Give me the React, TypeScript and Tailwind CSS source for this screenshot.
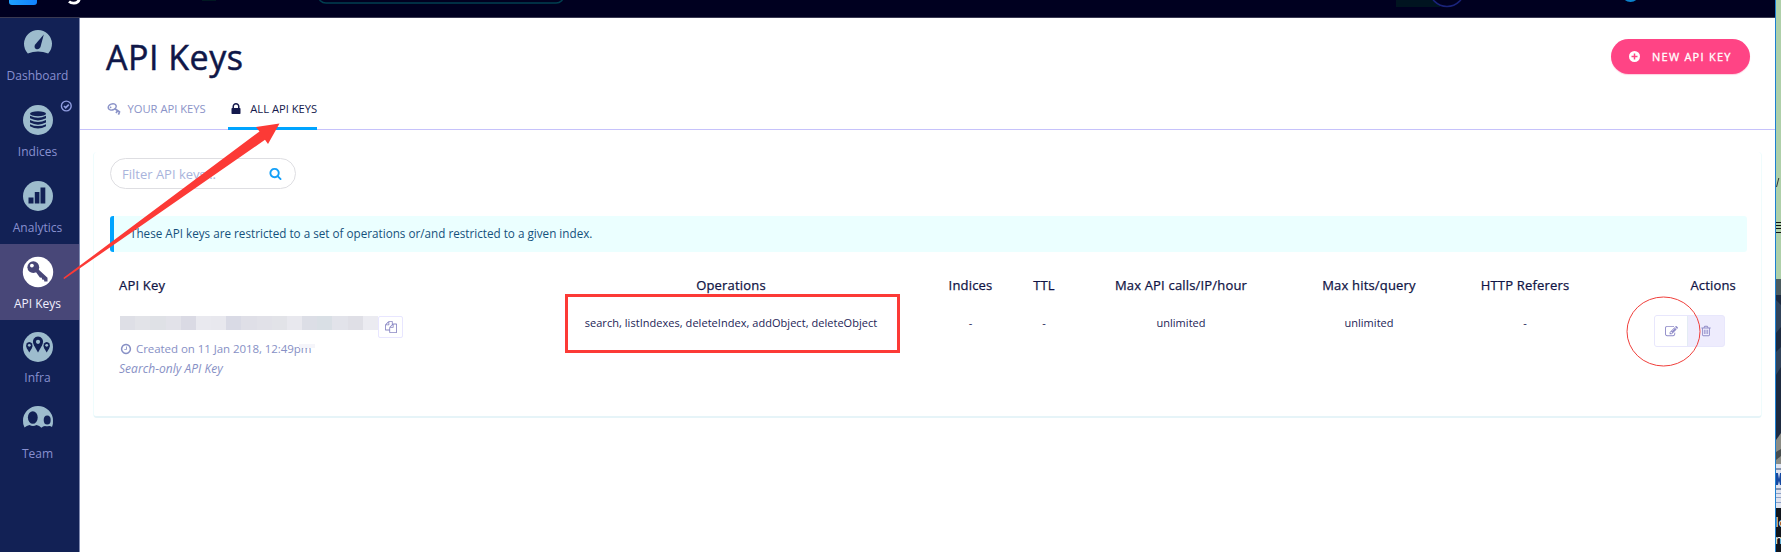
import React from "react";

const PATHS = {
  edit: "M888 1184l116-116-152-152-116 116v56h96v96h56zm440-720q-16-16-33 1l-350 350q-17 17-1 33t33-1l350-350q17-17 1-33zm80 594v190q0 119-84.5 203.5t-203.5 84.5h-832q-119 0-203.5-84.5t-84.5-203.5v-832q0-119 84.5-203.5t203.5-84.5h832q63 0 117 25 15 7 18 23 3 17-9 29l-49 49q-14 14-32 8-23-6-45-6h-832q-66 0-113 47t-47 113v832q0 66 47 113t113 47h832q66 0 113-47t47-113v-126q0-13 9-22l64-64q15-15 35-7t20 29zm-96-738l288 288-672 672h-288v-288zm444 132l-92 92-288-288 92-92q28-28 68-28t68 28l152 152q28 28 28 68t-28 68z",
  clock: "M1024 544v448q0 14-9 23t-23 9h-320q-14 0-23-9t-9-23v-64q0-14 9-23t23-9h224v-352q0-14 9-23t23-9h64q14 0 23 9t9 23zm416 352q0-148-73-273t-198-198-273-73-273 73-198 198-73 273 73 273 198 198 273 73 273-73 198-198 73-273zm224 0q0 209-103 385.5t-279.5 279.5-385.5 103-385.5-103-279.5-279.5-103-385.5 103-385.5 279.5-279.5 385.5-103 385.5 103 279.5 279.5 103 385.5z",
  trash: "M704 736v576q0 14-9 23t-23 9h-64q-14 0-23-9t-9-23v-576q0-14 9-23t23-9h64q14 0 23 9t9 23zm256 0v576q0 14-9 23t-23 9h-64q-14 0-23-9t-9-23v-576q0-14 9-23t23-9h64q14 0 23 9t9 23zm256 0v576q0 14-9 23t-23 9h-64q-14 0-23-9t-9-23v-576q0-14 9-23t23-9h64q14 0 23 9t9 23zm128 724v-948h-896v948q0 22 7 40.5t14.5 27 10.5 8.5h832q3 0 10.5-8.5t14.5-27 7-40.5zm-672-1076h448l-48-117q-7-9-17-11h-317q-10 2-17 11zm928 32v64q0 14-9 23t-23 9h-96v948q0 83-47 143.5t-113 60.5h-832q-66 0-113-58.5t-47-141.5v-952h-96q-14 0-23-9t-9-23v-64q0-14 9-23t23-9h309l70-167q15-37 54-63t79-26h320q40 0 79 26t54 63l70 167h309q14 0 23 9t9 23z",
  copy: "M1696 384q40 0 68 28t28 68v1216q0 40-28 68t-68 28h-960q-40 0-68-28t-28-68v-288h-544q-40 0-68-28t-28-68v-672q0-40 20-88t48-76l408-408q28-28 76-48t88-20h416q40 0 68 28t28 68v328q68-40 128-40h416zm-544 213l-299 299h299v-299zm-640-384l-299 299h299v-299zm196 647l316-316v-416h-384v416q0 40-28 68t-68 28h-416v640h512v-256q0-40 20-88t48-76zm956 804v-1152h-384v416q0 40-28 68t-68 28h-416v640h896z",
  lock: "M640 768h512v-192q0-106-75-181t-181-75-181 75-75 181v192zm832 96v576q0 40-28 68t-68 28h-960q-40 0-68-28t-28-68v-576q0-40 28-68t68-28h32v-192q0-184 132-316t316-132 316 132 132 316v192h32q40 0 68 28t28 68z",
  search: "M1216 832q0-185-131.5-316.5t-316.5-131.5-316.5 131.5-131.5 316.5 131.5 316.5 316.5 131.5 316.5-131.5 131.5-316.5zm512 832q0 52-38 90t-90 38q-54 0-90-38l-343-342q-179 124-399 124-143 0-273.5-55.5t-225-150-150-225-55.5-273.5 55.5-273.5 150-225 225-150 273.5-55.5 273.5 55.5 225 150 150 225 55.5 273.5q0 220-124 399l343 343q37 37 37 90z",
};

function Glyph({ name, className }: { name: keyof typeof PATHS; className: string }) {
  return (
    <svg viewBox="0 0 1792 1792" fill="currentColor" className={className}>
      <path d={PATHS[name]} />
    </svg>
  );
}

const DISC = "#9dbccd";
const NAVY = "#122155";

const icons: Record<string, React.ReactNode> = {
  Dashboard: (
    <>
      <path d="M4.8 24.5A14 14 0 1 1 25.2 24.5Q15 20.5 4.8 24.5z" fill={DISC} />
      <path d="M20.8 5.5L17.4 18.2Q15.6 21.2 13 20Q10.5 18.2 12.2 15.4z" fill={NAVY} />
    </>
  ),
  Indices: (
    <>
      <circle cx="15" cy="15" r="15" fill={DISC} />
      <g fill={NAVY}>
        <ellipse cx="15" cy="8.8" rx="8" ry="2.5" />
        <path d="M7 10.8Q15 14.6 23 10.8V13.3Q15 17.6 7 13.3z" />
        <path d="M7 15Q15 18.8 23 15V17.5Q15 21.8 7 17.5z" />
        <path d="M7 19.2Q15 23 23 19.2V21.3Q15 25.8 7 21.3z" />
      </g>
    </>
  ),
  Analytics: (
    <>
      <circle cx="15" cy="15" r="15" fill={DISC} />
      <path d="M5.500 16.500h5v6h-5zM11.800 11h4.600v11.500h-4.600zM17.500 6.500h4.800v16h-4.800z" fill={NAVY} />
    </>
  ),
  "API Keys": (
    <>
      <circle cx="15" cy="15" r="15.200" fill="#fff" />
      <circle cx="10.300" cy="10.200" r="5.900" fill="#484778" />
      <circle cx="8.900" cy="8.600" r="1.900" fill="#fff" />
      <path d="M12.500 14.500L15 12l9.500 8.800v3.700h-3.200l-.3-1.700-1.900-.2-.3-1.900-1.900-.2z" fill="#484778" />
    </>
  ),
  Infra: (
    <>
      <circle cx="15" cy="15" r="15" fill={DISC} />
      <g fill={NAVY}>
        <path d="M15 20.500L11 13.500Q9 9.500 10.800 6.800Q12.300 4.600 15 4.600T19.200 6.800Q21 9.500 19 13.500z" />
        <path d="M6.300 20.500L3.800 16.300Q2.500 13.500 3.600 11.600Q4.600 10 6.300 10T9 11.600Q10.100 13.500 8.800 16.300z" />
        <path d="M23.700 20.500L21.200 16.300Q19.900 13.500 21 11.600Q22 10 23.700 10T26.400 11.600Q27.500 13.500 26.200 16.300z" />
      </g>
      <circle cx="15" cy="9.800" r="2.100" fill={DISC} />
      <circle cx="6.300" cy="13.300" r="1.400" fill={DISC} />
      <circle cx="23.700" cy="13.300" r="1.400" fill={DISC} />
    </>
  ),
  Team: (
    <>
      <path d="M1.500 21.500Q-.3 18 0 14.500A15 14.500 0 0 1 30 14.500Q30.300 18 29 21Q27.500 19.800 26 20Q24 20.600 22 20Q20 20 18.400 21.800Q16.500 19.500 13.500 19Q10 21 6.500 19Q3.500 19.500 1.500 21.500z" fill={DISC} />
      <ellipse cx="9.800" cy="11.500" rx="4.900" ry="6.300" fill={NAVY} />
      <ellipse cx="24.200" cy="14" rx="3.500" ry="4.500" fill={NAVY} />
    </>
  ),
};

const nav = [
  { label: "Dashboard", box: "h-[74px] pt-[11px]", gap: "mt-[7px]" },
  { label: "Indices", box: "h-[76px] pt-[13px]", gap: "mt-[7px]" },
  { label: "Analytics", box: "h-[76px] pt-[13px]", gap: "mt-[7px]" },
  { label: "API Keys", box: "h-[76px] pt-[13px] bg-[#484778] text-[#f0f0ff]", gap: "mt-[7px]" },
  { label: "Infra", box: "h-[76px] pt-[12px]", gap: "mt-[6px]" },
  { label: "Team", box: "h-[76px] pt-[10px]", gap: "mt-[8px]" },
];

function Sidebar() {
  return (
    <nav className="flex w-[80px] shrink-0 flex-col border-r border-[#7f89b0] bg-[#122155] text-[#8890d0]">
      {nav.map((n) => (
        <div key={n.label} className={`relative flex flex-col items-center pr-[4px] ${n.box}`}>
          <svg viewBox="0 0 30 30" className="h-[30px] w-[30px] shrink-0 overflow-visible">
            {icons[n.label]}
          </svg>
          <span className={`text-[12px] leading-[20px] ${n.gap}`}>{n.label}</span>
          {n.label === "Indices" && (
            <svg viewBox="0 0 12 12" className="absolute top-[8px] left-[60px] h-[12px] w-[12px] overflow-visible" fill="none" stroke="#8f9ce0" strokeWidth="1.400">
              <circle cx="6.300" cy="6" r="4.900" />
              <path d="M4 6l1.700 1.700L8.800 4.600" strokeWidth="1.700" />
            </svg>
          )}
        </div>
      ))}
    </nav>
  );
}

function TopBar() {
  return (
    <header className="h-[18px] shrink-0 border-b border-[#3a3a52] bg-[#000020]">
      <svg width="1775" height="17" viewBox="0 0 1775 17" fill="none">
        <defs>
          <linearGradient id="logo" x1="0" x2="1">
            <stop offset="0" stopColor="#1fa2ff" />
            <stop offset="1" stopColor="#1183ff" />
          </linearGradient>
        </defs>
        <rect x="9" y="-20" width="28" height="25" rx="3" fill="url(#logo)" />
        <path d="M69 1.500Q71 3.300 74 3.200Q79 3 79.500-2" stroke="#fff" strokeWidth="2.800" />
        <rect x="202" y="-3" width="14" height="4" fill="#001822" />
        <rect x="318" y="-30" width="246" height="33" rx="8" stroke="#003f50" strokeWidth="1.500" />
        <rect x="1396" y="-2" width="44" height="9" fill="#001420" />
        <circle cx="1447" cy="-11" r="17.500" fill="#000020" stroke="#1a237a" strokeWidth="1.500" />
        <circle cx="1630.500" cy="-7" r="9" fill="#0b82cc" />
      </svg>
    </header>
  );
}

function Notice() {
  return (
    <div className="mt-[27px] mr-[14px] ml-[16px] flex h-[36px] items-center rounded-[3px] border-l-4 border-[#00a4ff] bg-[#ebffff] pl-[16px] text-[11.700px] text-[#15517c]">
      These API keys are restricted to a set of operations or/and restricted to a given index.
    </div>
  );
}

const mosaic = [
  "bg-[#dedfe6]", "bg-[#e2e3e8]", "bg-[#dfe1e6]", "bg-[#e2e2e9]", "bg-[#dadae4]", "bg-[#e9e9ef]",
  "bg-[#e8e8ee]", "bg-[#d9dae5]", "bg-[#dfdfe7]", "bg-[#e1e1e8]", "bg-[#e2e3e8]", "bg-[#e8e8ee]",
  "bg-[#dcdee6]", "bg-[#d9dfe5]", "bg-[#e2e3ea]", "bg-[#dfdfe6]", "bg-[#ebebf1]",
];

function KeysTable() {
  const cols = "grid grid-cols-[414px_396px_83px_64px_210px_166px_146px_138px] pl-[25px]";
  return (
    <>
      <div className={`${cols} mt-[24px] h-[20px] items-center text-center text-[13px] font-medium tracking-[0.180px] text-[#101445] [-webkit-text-stroke:0.25px_#101445]`}>
        <span className="text-left">API Key</span>
        <span>Operations</span>
        <span>Indices</span>
        <span>TTL</span>
        <span>Max API calls/IP/hour</span>
        <span>Max hits/query</span>
        <span>HTTP Referers</span>
        <span className="text-right">Actions</span>
      </div>
      <div className={`${cols} mt-[19px] text-center text-[11px] leading-[16px] tracking-[0.040px] text-[#1c2456]`}>
        <div className="text-left text-[#8790c5]">
          <div className="flex h-[22px]">
            <div className="mt-[1px] ml-[1px] flex h-[14px] w-[258px]">
              {mosaic.map((c, i) => (
                <div key={i} className={`h-full flex-1 ${c}`} />
              ))}
            </div>
            <div className="mt-[1px] flex h-[22px] w-[25px] items-center justify-center rounded-[2px] border border-[#e8e6ff] bg-white text-[#8a88c4]">
              <Glyph name="copy" className="h-[12px] w-[12px]" />
            </div>
          </div>
          <div className="mt-[2px] flex h-[19px] items-center text-[11.500px] tracking-normal">
            <Glyph name="clock" className="mr-[4px] ml-[1px] h-[12px] w-[12px]" />
            <span className="tracking-[-0.060px] whitespace-nowrap">Created on 11 Jan 2018, 12:49pm</span>
          </div>
          <div className="mt-[1px] flex h-[20px] items-center text-[12px] italic">Search-only API Key</div>
        </div>
        <span>search, listIndexes, deleteIndex, addObject, deleteObject</span>
        <span>-</span>
        <span>-</span>
        <span>unlimited</span>
        <span>unlimited</span>
        <span>-</span>
        <div className="mr-[11px] ml-auto flex h-[32px] w-[71px] overflow-hidden rounded-[3px] border border-[#e8e7fc] bg-[#eeecfd] text-[#8f8bc8]">
          <div className="flex w-[33px] items-center justify-center border-r border-[#e4ecf4] bg-white">
            <Glyph name="edit" className="h-[13px] w-[13px]" />
          </div>
          <div className="flex flex-1 items-center justify-center">
            <Glyph name="trash" className="h-[12px] w-[12px]" />
          </div>
        </div>
      </div>
    </>
  );
}

function DesktopEdge() {
  return (
    <aside className="w-[6px] shrink-0 overflow-hidden border-l border-[#1e7fd0]">
      <svg width="5" height="552" viewBox="0 0 5 552" fontFamily="Open Sans">
        <rect width="5" height="279" fill="#aed0a9" />
        <path d="M0.500 187L2.800 178" stroke="#333" strokeWidth="1" />
        <path d="M0 222.500h5M0 225.500h5M0 228.500h5M0 232.500h5" stroke="#111" />
        <rect y="279" width="5" height="273" fill="#1d2a40" />
        <path d="M0 279h5v16h-5z" fill="#4b5b5f" />
        <path d="M0 300l5 5v22l-5 6zM0 352l5-5v20l-5 8z" fill="#31435a" />
        <path d="M0 440l5-7v31h-5z" fill="#8b8c85" />
        <path d="M0 452l5-3v7l-5 4z" fill="#474d4e" />
        <path d="M0 464h5v44h-5z" fill="#dde2ee" />
        <path d="M0 469h5M0 489h5" stroke="#29416f" />
        <path d="M0 473h2l1 6 1-6h1v12h-1l-1-4-1 4h-2z" fill="#1648a0" />
        <path d="M0 493.500h5M0 497.500h5M0 502.500h5" stroke="#8ea0c6" />
        <rect y="508" width="5" height="44" fill="#10151c" />
        <text x="-0.500" y="527" fontSize="12" fill="#fff">lo</text>
        <text x="-1" y="544" fontSize="12" fill="#fff">n</text>
      </svg>
    </aside>
  );
}

function Annotations() {
  return (
    <svg className="pointer-events-none absolute inset-0" width="1781" height="552" viewBox="0 0 1781 552" fill="none">
      <rect x="299" y="344" width="16" height="4" fill="#f5f5fa" />
      <path d="M63.500 277.800L259.500 131.500L256 127L279.500 123.500L268 144L265 139.800L64 279.300z" fill="#fc3a36" />
      <rect x="566.500" y="295.500" width="332" height="56" stroke="#fc3a36" strokeWidth="3" />
      <ellipse cx="1663.500" cy="331.500" rx="36.500" ry="34.500" stroke="#f0403c" />
    </svg>
  );
}

export default function App() {
  return (
    <div className="relative flex h-[552px] w-[1781px] overflow-hidden bg-white font-['Open_Sans',sans-serif]">
      <div className="flex w-[1775px] flex-col">
        <TopBar />
        <div className="flex flex-1">
          <Sidebar />
          <main className="flex-1">
            <div className="flex h-[80px] justify-between pr-[25px] pl-[26px]">
              <h1 className="pt-[15px] text-[34px] leading-[48px] font-medium tracking-[0.500px] text-[#0f1748] [-webkit-text-stroke:0.5px_#0f1748]">API Keys</h1>
              <button className="mt-[21px] flex h-[35px] w-[139px] items-center rounded-full bg-[#ff4485] pl-[18px] text-[11px] font-medium tracking-[1.250px] text-white shadow-[0_1px_1px_#ffd0e0] [-webkit-text-stroke:0.3px_#fff]">
                <svg viewBox="0 0 11 11" className="mr-[12px] h-[11px] w-[11px]">
                  <circle cx="5.500" cy="5.500" r="5.500" fill="#fff" />
                  <path d="M5.500 2.500v6M2.500 5.500h6" stroke="#ff4485" strokeWidth="1.500" />
                </svg>
                <span className="pt-px whitespace-nowrap">NEW API KEY</span>
              </button>
            </div>
            <div className="flex h-[32px] border-b border-[#c6c2fb] pl-[27px] text-[11.200px]">
              <div className="mr-[22.500px] flex h-[22px] items-center text-[#8b93c8]">
                <svg viewBox="0 0 14 12" className="mr-[6.500px] h-[12px] w-[14px] overflow-visible" fill="none" stroke="currentColor" strokeWidth="1.500">
                  <ellipse cx="5.200" cy="3.900" rx="4.100" ry="3" transform="rotate(-20 5.200 3.900)" />
                  <circle cx="3.600" cy="4.300" r=".9" fill="currentColor" strokeWidth="0" />
                  <path d="M7.500 5.500l5.500 3.800M10.600 7.800l-1.600 2.200M12.600 9l-1.200 2.600" strokeWidth="1.700" />
                </svg>
                YOUR API KEYS
              </div>
              <div className="flex h-[32px] w-[89px] items-start border-b-[3px] border-[#00a4ff] pt-[3px] text-[#14194c]">
                <Glyph name="lock" className="mt-[1px] mr-[7px] ml-[1px] h-[14px] w-[14px]" />
                <span className="leading-[16px] whitespace-nowrap">ALL API KEYS</span>
              </div>
            </div>
            <section className="mt-[22px] mr-[13px] ml-[13px] h-[266px] rounded-[4px] border-x border-b-2 border-x-[#effcfd] border-b-[#e6f4f8] pt-[6px]">
              <div className="ml-[16px] flex h-[31px] w-[186px] items-center justify-between rounded-full border border-[#dedee2] pr-[13px] pl-[11px] text-[13px] text-[#a9b4dc]">
                <span className="pt-[2px]">Filter API keys...</span>
                <Glyph name="search" className="h-[13px] w-[13px] text-[#14a0f8]" />
              </div>
              <Notice />
              <KeysTable />
            </section>
          </main>
        </div>
      </div>
      <DesktopEdge />
      <Annotations />
    </div>
  );
}
